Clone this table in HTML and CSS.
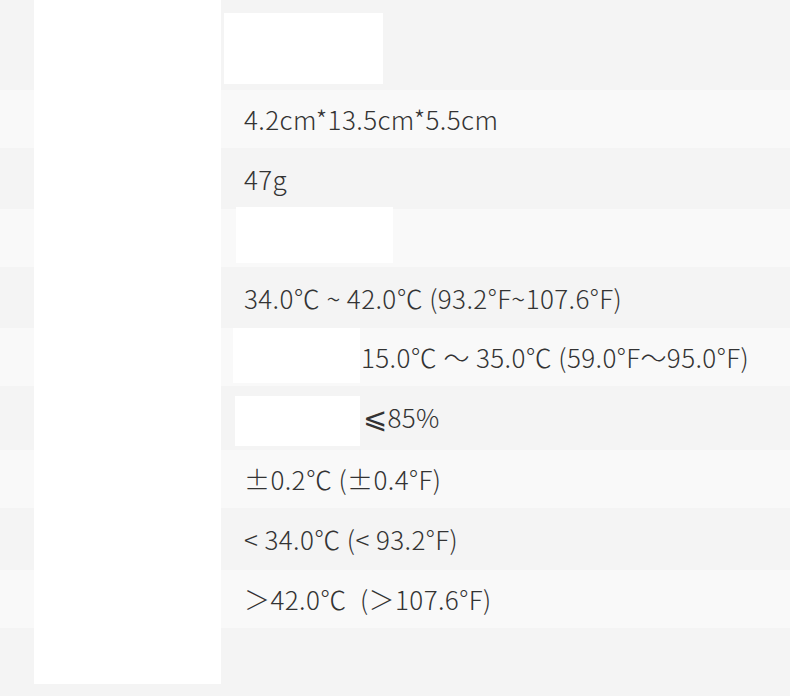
FILE: index.html
```html
<!DOCTYPE html>
<html lang="zh">
<head>
<meta charset="utf-8">
<link rel="stylesheet" href="styles.css">
</head>
<body>
<div class="table">
  <div class="row r0 dark"><div class="gap"></div><div class="label"></div><div class="value"><div class="blank b0"></div></div></div>
  <div class="row r1 light"><div class="gap"></div><div class="label"></div><div class="value">4.2cm*13.5cm*5.5cm</div></div>
  <div class="row r2 dark"><div class="gap"></div><div class="label"></div><div class="value">47g</div></div>
  <div class="row r3 light"><div class="gap"></div><div class="label"></div><div class="value"><div class="blank b3"></div></div></div>
  <div class="row r4 dark"><div class="gap"></div><div class="label"></div><div class="value">34.0℃ ~ 42.0℃ (93.2°F~107.6°F)</div></div>
  <div class="row r5 light"><div class="gap"></div><div class="label"></div><div class="value inset"><div class="blank b5"></div><span>15.0℃ ～ 35.0℃ (59.0°F～95.0°F)</span></div></div>
  <div class="row r6 dark"><div class="gap"></div><div class="label"></div><div class="value inset"><div class="blank b6"></div><span><span class="leq">⩽</span>85%</span></div></div>
  <div class="row r7 light"><div class="gap"></div><div class="label"></div><div class="value">±0.2℃ (±0.4°F)</div></div>
  <div class="row r8 dark"><div class="gap"></div><div class="label"></div><div class="value">&lt; 34.0℃ (&lt; 93.2°F)</div></div>
  <div class="row r9 light"><div class="gap"></div><div class="label"></div><div class="value">＞42.0℃&ensp;(＞107.6°F)</div></div>
  <div class="row r10 dark"><div class="gap"></div><div class="label"></div><div class="value"></div></div>
</div>
</body>
</html>
```
FILE: styles.css
```css
html, body {
  margin: 0;
  padding: 0;
  background: #f4f4f4;
}
body {
  width: 790px;
  height: 696px;
  overflow: hidden;
  font-family: "Noto Sans CJK SC", "Noto Sans", sans-serif;
  font-weight: 300;
  color: #333333;
  font-size: 26px;
  letter-spacing: 0.4px;
}
.table {
  display: flex;
  flex-direction: column;
}
.row {
  display: flex;
  align-items: stretch;
}
.dark { background: #f4f4f4; }
.light { background: #f9f9f9; }
.r0 { height: 90px; }
.r1 { height: 58px; }
.r2 { height: 61px; }
.r3 { height: 58px; }
.r4 { height: 61px; }
.r5 { height: 58px; }
.r6 { height: 64px; }
.r7 { height: 58px; }
.r8 { height: 62px; }
.r9 { height: 58px; }
.r10 { height: 56px; }
.gap { width: 34px; flex: none; }
.label { width: 187px; flex: none; background: #ffffff; }
.value {
  flex: 1;
  display: flex;
  align-items: center;
  padding-left: 23px;
  white-space: nowrap;
  line-height: 1;
}
.value.inset { padding-left: 0; }
.blank { background: #ffffff; flex: none; }
.b0 { width: 159px; height: 71px; margin-left: -20px; align-self: flex-start; margin-top: 13px; }
.b3 { width: 157px; height: 56px; margin-left: -8px; align-self: flex-start; margin-top: -2px; }
.b5 { width: 127px; height: 55px; margin-left: 12px; align-self: flex-start; margin-top: 0; }
.b6 { width: 125px; height: 50px; margin-left: 14px; align-self: flex-start; margin-top: 10px; }
.inset span { margin-left: 1px; }
.inset .leq {
  margin-left: 2px;
  font-family: "DejaVu Sans", sans-serif;
  font-weight: 200;
  font-size: 29px;
  line-height: 1;
}
```
